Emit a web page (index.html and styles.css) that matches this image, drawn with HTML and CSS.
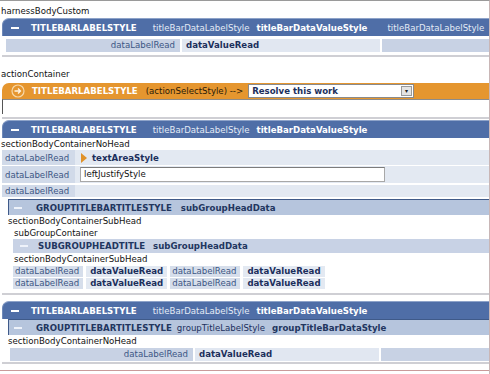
FILE: index.html
```html
<!DOCTYPE html>
<html lang="en">
<head>
    <meta charset="UTF-8">
    <title>Harness Styles</title>
    <link rel="stylesheet" href="styles.css">
</head>
<body>
<div class="page">
    <div class="tag">harnessBodyCustom</div>
    <div class="section">
        <div class="titlebar">
            <span class="minus"></span>
            <span class="tb-label">TITLEBARLABELSTYLE</span>
            <span class="tb-dl">titleBarDataLabelStyle</span>
            <span class="tb-dv">titleBarDataValueStyle</span>
            <span class="tb-dl">titleBarDataLabelStyle</span>
        </div>
        <div class="head-row">
            <div class="cell-label wide">dataLabelRead</div>
            <div class="cell-value wide"><b>dataValueRead</b></div>
            <div class="cell-label rest"></div>
        </div>
    </div>

    <div class="tag tag-gap">actionContainer</div>
    <div class="section">
        <div class="actionbar">
            <svg class="go" width="14" height="14" viewBox="0 0 14 14">
                <circle cx="7" cy="7" r="6" fill="none" stroke="#f7d8a8" stroke-width="1.2"/>
                <path d="M3.5 7h6M7 4.5 9.5 7 7 9.5" fill="none" stroke="#fff3e0" stroke-width="1.3"/>
            </svg>
            <span class="tb-label">TITLEBARLABELSTYLE</span>
            <span class="action-note">(actionSelectStyle) --&gt;</span>
            <div class="select">
                <span>Resolve this work</span>
                <span class="select-btn">&#9662;</span>
            </div>
        </div>
        <div class="action-area"></div>
    </div>

    <div class="section sec3">
        <div class="titlebar">
            <span class="minus"></span>
            <span class="tb-label">TITLEBARLABELSTYLE</span>
            <span class="tb-dl">titleBarDataLabelStyle</span>
            <span class="tb-dv">titleBarDataValueStyle</span>
        </div>
        <div class="tag">sectionBodyContainerNoHead</div>
        <div class="frow r1">
            <div class="flabel">dataLabelRead</div>
            <div class="fvalue"><span class="tri"></span><b class="navy">textAreaStyle</b></div>
        </div>
        <div class="frow r2">
            <div class="flabel">dataLabelRead</div>
            <div class="fvalue"><div class="input">leftJustifyStyle</div></div>
        </div>
        <div class="frow r3">
            <div class="flabel">dataLabelRead</div>
        </div>
        <div class="group">
            <div class="groupbar">
                <span class="gminus"></span>
                <b>GROUPTITLEBARTITLESTYLE</b>
                <b class="gdata">subGroupHeadData</b>
            </div>
            <div class="tag">sectionBodyContainerSubHead</div>
            <div class="subgroup">
                <div class="tag">subGroupContainer</div>
                <div class="subbar">
                    <span class="gminus"></span>
                    <b>SUBGROUPHEADTITLE</b>
                    <b class="sdata">subGroupHeadData</b>
                </div>
                <div class="tag">sectionBodyContainerSubHead</div>
                <div class="srow">
                    <span class="sl">dataLabelRead</span><span class="sv">dataValueRead</span><span class="sl">dataLabelRead</span><span class="sv">dataValueRead</span>
                </div>
                <div class="srow">
                    <span class="sl">dataLabelRead</span><span class="sv">dataValueRead</span><span class="sl">dataLabelRead</span><span class="sv">dataValueRead</span>
                </div>
            </div>
        </div>
    </div>

    <div class="section sec4">
        <div class="titlebar">
            <span class="minus"></span>
            <span class="tb-label">TITLEBARLABELSTYLE</span>
            <span class="tb-dl">titleBarDataLabelStyle</span>
            <span class="tb-dv">titleBarDataValueStyle</span>
        </div>
        <div class="group">
            <div class="groupbar">
                <span class="gminus"></span>
                <b>GROUPTITLEBARTITLESTYLE</b>
                <span class="glabel">groupTitleLabelStyle</span>
                <b class="gdata">groupTitleBarDataStyle</b>
            </div>
            <div class="tag">sectionBodyContainerNoHead</div>
            <div class="head-row">
                <div class="cell-label wide">dataLabelRead</div>
                <div class="cell-value wide"><b>dataValueRead</b></div>
                <div class="cell-label rest"></div>
            </div>
        </div>
    </div>
    <div class="footer"></div>
</div>
</body>
</html>
```

FILE: styles.css
```css
body {
    margin: 0;
    font-family: "DejaVu Sans", Verdana, sans-serif;
    font-size: 8.6px;
    color: #111;
    background: #fff;
}
.page {
    width: 489px;
    height: 373px;
    border-top: 1px solid #9a9a9a;
    border-right: 1px solid #c9b6b6;
    overflow: hidden;
}
.tag {
    height: 12px;
    line-height: 12px;
    padding-left: 1px;
    white-space: nowrap;
}
.page > .tag:first-child {
    margin-top: 4px;
    margin-bottom: 1px;
}
.tag-gap {
    margin-top: 11px;
    margin-bottom: 3px;
}
.section {
    margin-left: 2px;
    border-bottom: 2px solid #cfcfd4;
    padding-bottom: 3px;
}

/* title bars */
.titlebar {
    height: 18px;
    display: flex;
    align-items: center;
    background: #4f6ea7;
    border-top-left-radius: 7px;
    border-top: 1px solid #8ea3c9;
    border-left: 1px solid #6f89b8;
    box-sizing: border-box;
    color: #e4ebf6;
    white-space: nowrap;
    overflow: hidden;
}
.titlebar > *,
.actionbar > *,
.groupbar > *,
.subbar > * {
    flex-shrink: 0;
}
.minus {
    width: 8px;
    height: 2px;
    background: #fff;
    margin: 0 12px 0 8px;
}
.tb-label {
    font-weight: bold;
    color: #fff;
    margin-right: 16px;
}
.tb-dl {
    margin-right: 7px;
}
.tb-dv {
    font-weight: bold;
    color: #fff;
    margin-right: 20px;
}

.head-row {
    display: flex;
    height: 13px;
    line-height: 13px;
    margin: 3px 0 0 4px;
    gap: 2px;
}
.cell-label {
    background: #c8d2e4;
    color: #3c5684;
    text-align: right;
    padding-right: 5px;
}
.cell-label.wide {
    width: 169px;
}
.cell-value {
    background: #e1e7f1;
    color: #1c2f5c;
    padding-left: 4px;
}
.cell-value.wide {
    width: 194px;
}
.cell-label.rest {
    flex: 1;
}

/* action container */
.actionbar {
    height: 16px;
    display: flex;
    align-items: center;
    background: #e5962f;
    border-top-left-radius: 7px;
    white-space: nowrap;
}
.go {
    margin: 0 7px 0 9px;
}
.actionbar .tb-label {
    margin-right: 8px;
}
.action-note {
    color: #2a1a08;
}
.select {
    margin-left: 5px;
    width: 166px;
    height: 14px;
    box-sizing: border-box;
    background: #fff;
    border: 1px solid #8a8a8a;
    display: flex;
    align-items: center;
    justify-content: space-between;
    font-weight: bold;
    color: #1c2f5c;
    padding-left: 3px;
}
.select-btn {
    width: 11px;
    height: 10px;
    margin-right: 1px;
    background: #e4e4e4;
    border: 1px solid #9a9a9a;
    box-sizing: border-box;
    font-size: 6px;
    line-height: 8px;
    text-align: center;
    color: #222;
}
.action-area {
    height: 14px;
    background: #fff;
    border-left: 1px solid #555;
    border-top: 1px solid #8c8c8c;
}

/* section 3 */
.sec3 {
    margin-top: 1px;
    padding-bottom: 4px;
}
.sec3 > .tag {
    margin-left: -2px;
}
.frow {
    display: flex;
    background: #e3e9f2;
}
.flabel {
    width: 66px;
    padding: 0 4px 0 3px;
    background: #d1dae9;
    color: #3c5684;
    display: flex;
    align-items: center;
}
.fvalue {
    display: flex;
    align-items: center;
    padding-left: 5px;
}
.r1 {
    height: 15px;
    margin-bottom: 1px;
}
.r2 {
    height: 17px;
    margin-bottom: 2px;
}
.r3 {
    height: 12px;
    margin-bottom: 2px;
}
.tri {
    width: 0;
    height: 0;
    border-top: 5px solid transparent;
    border-bottom: 5px solid transparent;
    border-left: 6px solid #e0922a;
    margin: 0 5px 0 1px;
}
.navy {
    color: #1c2f5c;
}
.input {
    width: 305px;
    height: 15px;
    line-height: 13px;
    box-sizing: border-box;
    background: #fff;
    border: 1px solid #a8a8a8;
    border-top-color: #7c7c7c;
    padding-left: 3px;
}
.group {
    margin-left: 6px;
}
.groupbar {
    height: 16px;
    display: flex;
    align-items: center;
    background: #b6c5dd;
    border-top: 1px solid #3f5a89;
    border-left: 1px solid #3f5a89;
    box-sizing: border-box;
    color: #22365f;
    white-space: nowrap;
}
.gminus {
    width: 8px;
    height: 2px;
    background: #eef2fa;
    margin: 0 14px 0 5px;
}
.gdata {
    margin-left: 9px;
}
.glabel {
    margin-left: 5px;
    color: #1c2f5c;
}
.glabel + .gdata {
    margin-left: 7px;
}
.group > .tag {
    padding-left: 0;
}
.subgroup {
    margin-left: 5px;
}
.subbar {
    height: 14px;
    display: flex;
    align-items: center;
    background: #c8d2e5;
    color: #22365f;
    white-space: nowrap;
}
.subbar .gminus {
    margin: 0 10px 0 7px;
}
.sdata {
    margin-left: 8px;
}
.srow {
    display: flex;
    gap: 3px;
    margin-top: 1px;
    height: 11px;
    line-height: 11px;
}
.sl {
    background: #d6deeb;
    color: #3c5684;
    padding: 0 4px 0 2px;
}
.sv {
    background: #e3e9f2;
    color: #1c2f5c;
    font-weight: bold;
    padding: 0 4px;
}

/* section 4 */
.sec4 {
    margin-top: 6px;
    padding-bottom: 1px;
}
.sec4 .head-row {
    margin: 1px 0 0 2px;
}
.sec4 .cell-label.wide {
    width: 178px;
}
.sec4 .cell-value.wide {
    width: 180px;
}
.footer {
    margin-top: 6px;
    border-top: 1px solid #c99a9a;
}
```
